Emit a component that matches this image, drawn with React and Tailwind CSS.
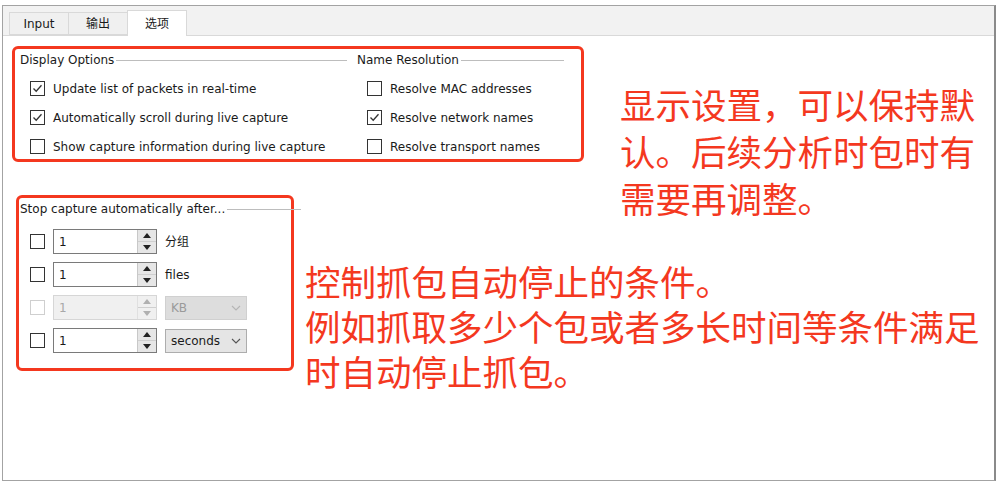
const ui = { fontFamily: '"DejaVu Sans", "Noto Sans CJK SC", sans-serif' };
const cjk = { fontFamily: '"Noto Sans CJK SC", sans-serif' };

const Check = ({ checked, disabled }) => (
  <span
    className={`w-[15px] h-[15px] shrink-0 border bg-white flex items-center justify-center ${
      disabled ? 'border-[#cfcfcf]' : 'border-[#333333]'
    }`}
  >
    {checked && (
      <svg width="11" height="11" viewBox="0 0 11 11">
        <polyline points="1.5,5.5 4.2,8.3 9.5,2.2" fill="none" stroke="#333" strokeWidth="1.3" />
      </svg>
    )}
  </span>
);

const CheckRow = ({ checked, label }) => (
  <div className="h-[29px] flex items-center gap-[8px] text-[12px] text-[#1a1a1a]">
    <Check checked={checked} />
    <span>{label}</span>
  </div>
);

const GroupTitle = ({ title, className = '' }) => (
  <div className={`flex items-center gap-[2px] h-[20px] text-[12px] text-[#1a1a1a] ${className}`}>
    <span className="shrink-0">{title}</span>
    <span className="flex-1 h-px bg-[#bdbdbd]" />
  </div>
);

const Spin = ({ disabled }) => (
  <div
    className={`flex w-[104px] h-[25px] border ${
      disabled ? 'border-[#d6d6d6] bg-[#f0f0f0]' : 'border-[#7a7a7a] bg-white'
    }`}
  >
    <span className={`flex-1 pl-[5px] flex items-center text-[12px] ${disabled ? 'text-[#a8a8a8]' : 'text-[#1a1a1a]'}`}>1</span>
    <div className={`w-[19px] flex flex-col border-l ${disabled ? 'border-[#e0e0e0]' : 'border-[#c8c8c8] bg-[#e6e6e6]'}`}>
      <div className="flex-1 flex items-center justify-center border-b border-[#cfcfcf]">
        <svg width="8" height="5" viewBox="0 0 8 5">
          <polygon points="0,5 4,0 8,5" fill={disabled ? '#b0b0b0' : '#222'} />
        </svg>
      </div>
      <div className="flex-1 flex items-center justify-center">
        <svg width="8" height="5" viewBox="0 0 8 5">
          <polygon points="0,0 8,0 4,5" fill={disabled ? '#b0b0b0' : '#222'} />
        </svg>
      </div>
    </div>
  </div>
);

const Combo = ({ label, disabled }) => (
  <div
    className={`w-[82px] h-[24px] border flex items-center justify-between px-[5px] text-[12px] ${
      disabled ? 'border-[#d0d0d0] bg-[#dddddd] text-[#9a9a9a]' : 'border-[#adadad] bg-[#e5e5e5] text-[#1a1a1a]'
    }`}
  >
    <span>{label}</span>
    <svg width="10" height="6" viewBox="0 0 10 6">
      <polyline points="1,1 5,5 9,1" fill="none" stroke={disabled ? '#b5b5b5' : '#555'} strokeWidth="1.1" />
    </svg>
  </div>
);

const StopRow = ({ disabled, children }) => (
  <div className="h-[33px] flex items-center pl-[11px]">
    <Check disabled={disabled} />
    <div className="ml-[8px]">
      <Spin disabled={disabled} />
    </div>
    <div className="ml-[8px] text-[12px] text-[#1a1a1a]">{children}</div>
  </div>
);

const Tab = ({ label, active }) => (
  <div
    className={`w-[60px] flex items-center justify-center text-[12px] text-[#1a1a1a] border border-[#d9d9d9] ${
      active ? 'h-[26px] bg-white border-b-0 -mb-px relative' : 'h-[23px] bg-[#f0f0f0] -mr-px'
    }`}
  >
    {label}
  </div>
);

export default function App() {
  return (
    <div className="w-[1000px] h-[485px] bg-white overflow-hidden" style={ui}>
      <div className="ml-[2px] mt-[5px] w-[994px] h-[476px] border border-[#a3a3a3] border-r-2 border-r-[#8a8a8a] flex flex-col">
        {/* tab strip */}
        <div className="h-[30px] bg-[#f2f2f2] flex items-end pl-[6px] border-b border-[#d9d9d9]">
          <Tab label="Input" />
          <Tab label="输出" />
          <Tab label="选项" active />
        </div>

        {/* options page */}
        <div className="flex-1 bg-white">
          <div className="flex items-start">
            <div className="ml-[9px] mt-[10px] w-[572px] h-[116px] border-[3px] border-[#f4381f] rounded-[6px] flex pt-[1px]">
              <div className="w-[337px] pl-[5px] pr-[5px]">
                <GroupTitle title="Display Options" />
                <div className="pl-[10px] mt-[4px]">
                  <CheckRow checked label="Update list of packets in real-time" />
                  <CheckRow checked label="Automatically scroll during live capture" />
                  <CheckRow label="Show capture information during live capture" />
                </div>
              </div>
              <div className="flex-1 pl-[5px] pr-[17px]">
                <GroupTitle title="Name Resolution" />
                <div className="pl-[10px] mt-[4px]">
                  <CheckRow label="Resolve MAC addresses" />
                  <CheckRow checked label="Resolve network names" />
                  <CheckRow label="Resolve transport names" />
                </div>
              </div>
            </div>
            <div className="ml-[36px] mt-[44px] text-[35.5px] leading-[47px] text-[#f4381f] whitespace-nowrap" style={cjk}>
              显示设置，可以保持默
              <br />
              认。后续分析时包时有
              <br />
              需要再调整。
            </div>
          </div>

          <div className="flex items-start -mt-[26px]">
            <div className="ml-[13px] w-[278px] h-[176px] border-[3px] border-[#f4381f] rounded-[6px] pt-[1px]">
              <GroupTitle title="Stop capture automatically after..." className="pl-[1px] -mr-[10px]" />
              <div className="mt-[6px]">
                <StopRow>分组</StopRow>
                <StopRow>files</StopRow>
                <StopRow disabled>
                  <Combo label="KB" disabled />
                </StopRow>
                <StopRow>
                  <Combo label="seconds" />
                </StopRow>
              </div>
            </div>
            <div className="ml-[11px] mt-[63px] text-[35.5px] leading-[45px] text-[#f4381f] whitespace-nowrap" style={cjk}>
              控制抓包自动停止的条件。
              <br />
              例如抓取多少个包或者多长时间等条件满足
              <br />
              时自动停止抓包。
            </div>
          </div>
        </div>
      </div>
    </div>
  );
}
